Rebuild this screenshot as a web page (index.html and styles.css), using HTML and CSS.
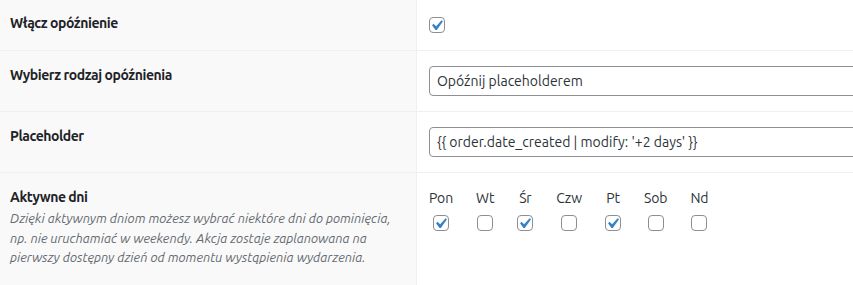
FILE: index.html
```html
<!DOCTYPE html>
<html lang="pl">
<head>
<meta charset="utf-8">
<title>Opóźnienie</title>
<link rel="stylesheet" href="styles.css">
</head>
<body>
<div class="settings">
  <div class="row row-first">
    <div class="label-cell"><span class="label">Włącz opóźnienie</span></div>
    <div class="field-cell">
      <span class="cb"><svg viewBox="2.86 1.9 15.24 15.24" width="16" height="16"><path d="M14.83 4.89l1.34.94-5.81 8.38H9.02L5.78 9.67l1.34-1.25 2.57 2.4z"/></svg></span>
    </div>
  </div>
  <div class="row">
    <div class="label-cell"><span class="label">Wybierz rodzaj opóźnienia</span></div>
    <div class="field-cell"><div class="text-box">Opóźnij placeholderem</div></div>
  </div>
  <div class="row">
    <div class="label-cell"><span class="label">Placeholder</span></div>
    <div class="field-cell"><div class="text-box">{{ order.date_created | modify: '+2 days' }}</div></div>
  </div>
  <div class="row row-last">
    <div class="label-cell">
      <span class="label">Aktywne dni</span>
      <p class="description">Dzięki aktywnym dniom możesz wybrać niektóre dni do pominięcia, np. nie uruchamiać w weekendy. Akcja zostaje zaplanowana na pierwszy dostępny dzień od momentu wystąpienia wydarzenia.</p>
    </div>
    <div class="field-cell">
      <div class="days">
        <div class="day"><span class="day-name">Pon</span><span class="cb"><svg viewBox="2.86 1.9 15.24 15.24" width="16" height="16"><path d="M14.83 4.89l1.34.94-5.81 8.38H9.02L5.78 9.67l1.34-1.25 2.57 2.4z"/></svg></span></div>
        <div class="day"><span class="day-name">Wt</span><span class="cb"></span></div>
        <div class="day"><span class="day-name">Śr</span><span class="cb"><svg viewBox="2.86 1.9 15.24 15.24" width="16" height="16"><path d="M14.83 4.89l1.34.94-5.81 8.38H9.02L5.78 9.67l1.34-1.25 2.57 2.4z"/></svg></span></div>
        <div class="day"><span class="day-name">Czw</span><span class="cb"></span></div>
        <div class="day"><span class="day-name">Pt</span><span class="cb"><svg viewBox="2.86 1.9 15.24 15.24" width="16" height="16"><path d="M14.83 4.89l1.34.94-5.81 8.38H9.02L5.78 9.67l1.34-1.25 2.57 2.4z"/></svg></span></div>
        <div class="day"><span class="day-name">Sob</span><span class="cb"></span></div>
        <div class="day"><span class="day-name">Nd</span><span class="cb"></span></div>
      </div>
    </div>
  </div>
</div>
</body>
</html>
```
FILE: styles.css
```css
html, body {
  margin: 0;
  padding: 0;
  overflow: hidden;
  background: #fff;
}
body {
  font-family: Ubuntu, Roboto, "Noto Sans", sans-serif;
  color: #1d2327;
  font-size: 14px;
}
.settings {
  display: flex;
  flex-direction: column;
}
.row {
  display: grid;
  grid-template-columns: 417px 1fr;
  border-bottom: 1px solid #f0f0f1;
}
.label-cell {
  background: #f9f9f9;
  border-right: 1px solid #f0f0f1;
  padding: 15px 20px 15px 10px;
}
.label {
  display: block;
  font-weight: 700;
  font-size: 14px;
  line-height: 18px;
  letter-spacing: -0.45px;
  color: #1d2327;
}
.field-cell {
  padding: 15px 12px;
  overflow: hidden;
}
.row-first {
  height: 51px;
  box-sizing: border-box;
}
.row-first .label-cell {
  padding-top: 14px;
}
.row-first .field-cell {
  padding-top: 17px;
}
.row-last {
  height: 120px;
}
.text-box {
  box-sizing: border-box;
  width: 460px;
  height: 30px;
  border: 1px solid #8c8f94;
  border-radius: 4px;
  padding: 0 7px;
  font-size: 14px;
  line-height: 28px;
  color: #2c3338;
  background: #fff;
  white-space: nowrap;
}
.description {
  margin: 3px 0 0;
  font-size: 13px;
  line-height: 19.5px;
  font-style: italic;
  color: #646970;
}
.cb {
  display: block;
  box-sizing: border-box;
  width: 16px;
  height: 16px;
  border: 1px solid #8c8f94;
  border-radius: 4px;
  background: #fff;
}
.cb svg {
  display: block;
  margin: -1px;
  fill: #3582c4;
}
.days {
  display: flex;
  gap: 23px;
}
.day {
  display: flex;
  flex-direction: column;
  align-items: center;
  gap: 7px;
}
.day-name {
  font-size: 14px;
  line-height: 20px;
  letter-spacing: -0.1px;
  color: #2c3338;
}
```
